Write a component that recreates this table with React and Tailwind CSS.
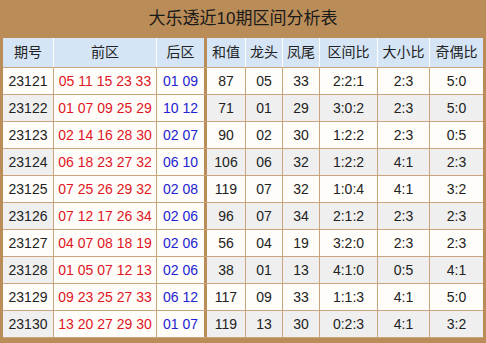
const rows = [
  ["23121", "05 11 15 23 33", "01 09", "87", "05", "33", "2:2:1", "2:3", "5:0"],
  ["23122", "01 07 09 25 29", "10 12", "71", "01", "29", "3:0:2", "2:3", "5:0"],
  ["23123", "02 14 16 28 30", "02 07", "90", "02", "30", "1:2:2", "2:3", "0:5"],
  ["23124", "06 18 23 27 32", "06 10", "106", "06", "32", "1:2:2", "4:1", "2:3"],
  ["23125", "07 25 26 29 32", "02 08", "119", "07", "32", "1:0:4", "4:1", "3:2"],
  ["23126", "07 12 17 26 34", "02 06", "96", "07", "34", "2:1:2", "2:3", "2:3"],
  ["23127", "04 07 08 18 19", "02 06", "56", "04", "19", "3:2:0", "2:3", "2:3"],
  ["23128", "01 05 07 12 13", "02 06", "38", "01", "13", "4:1:0", "0:5", "4:1"],
  ["23129", "09 23 25 27 33", "06 12", "117", "09", "33", "1:1:3", "4:1", "5:0"],
  ["23130", "13 20 27 29 30", "01 07", "119", "13", "30", "0:2:3", "4:1", "3:2"],
];

const heads = ["期号", "前区", "后区", "和值", "龙头", "凤尾", "区间比", "大小比", "奇偶比"];
const widths = ["w-[51px]", "w-[103px]", "w-[50px]", "w-[39px]", "w-[37px]", "w-[37px]", "w-[58px]", "w-[52px]", "w-[53px]"];

function Cell({ i, children, className }) {
  const edge = i === 2 ? "border-r-[3px] border-r-[#b98c58]" : i === 8 ? "" : "border-r";
  return (
    <div className={`${widths[i]} ${edge} flex items-center justify-center shrink-0 ${className}`}>
      {children}
    </div>
  );
}

export default function App() {
  return (
    <div
      className="w-[486px] h-[343px] bg-[#b98c58] px-[3px] pb-[5px] text-[14px] text-[#222]"
      style={{ fontFamily: '"Liberation Sans", "Noto Sans CJK SC", sans-serif' }}
    >
      <div className="h-[38px] flex items-center justify-center text-[17px] text-[#1a1a1a]">
        大乐透近10期区间分析表
      </div>
      <div className="flex h-[30px] bg-[#d5e5f5] border-b border-[#c9a57d]">
        {heads.map((h, i) => (
          <Cell key={h} i={i} className="border-white">
            {h}
          </Cell>
        ))}
      </div>
      {rows.map((r, ri) => {
        const alt = ri % 2 === 1;
        const bg = alt ? "bg-[#efefef]" : "bg-[#fffdf9]";
        return (
          <div key={r[0]} className="flex h-[27px] border-b border-[#c9a57d]">
            {r.map((v, i) => (
              <Cell
                key={i}
                i={i}
                className={`border-[#c9a57d] ${i === 1 || i === 2 ? "bg-[#fffdf9]" : bg} ${
                  i === 1 ? "text-[#e0161f]" : i === 2 ? "text-[#2323d2]" : ""
                }`}
              >
                {v}
              </Cell>
            ))}
          </div>
        );
      })}
    </div>
  );
}
